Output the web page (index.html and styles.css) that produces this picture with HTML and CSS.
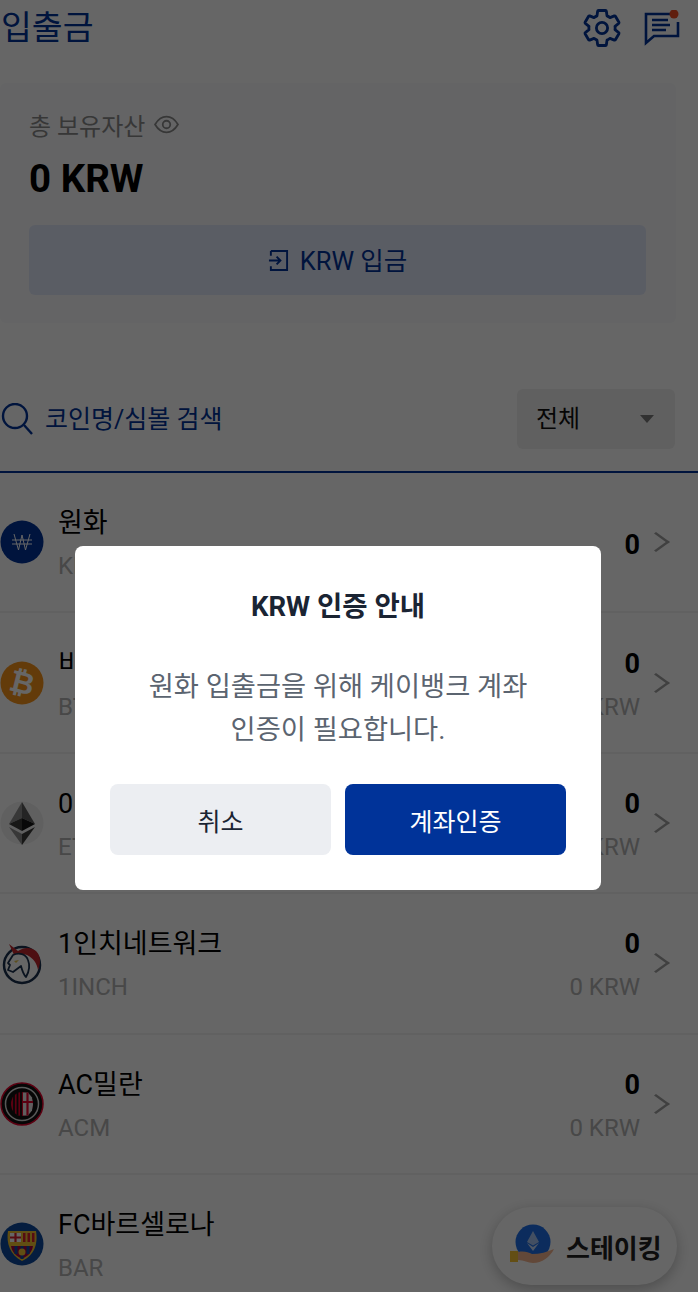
FILE: index.html
```html
<!DOCTYPE html>
<html lang="ko">
<head>
    <meta charset="UTF-8">
    <title>입출금</title>
    <link rel="stylesheet" href="styles.css">
</head>
<body>
<div class="page">
    <header class="top-bar">
        <h1>입출금</h1>
        <div class="top-icons">
            <svg class="gear" viewBox="0 0 24 24" fill="none" stroke="#003399" stroke-width="1.6" stroke-linejoin="round">
                <path d="M19.43 12.98c.04-.32.07-.64.07-.98 0-.34-.03-.66-.07-.98l2.11-1.65c.19-.15.24-.42.12-.64l-2-3.46c-.09-.16-.26-.25-.44-.25-.06 0-.12.01-.17.03l-2.49 1c-.52-.4-1.08-.73-1.69-.98l-.38-2.65C14.46 2.18 14.25 2 14 2h-4c-.25 0-.46.18-.49.42l-.38 2.65c-.61.25-1.17.59-1.69.98l-2.49-1c-.06-.02-.12-.03-.18-.03-.17 0-.34.09-.43.25l-2 3.46c-.13.22-.07.49.12.64l2.11 1.65c-.04.32-.07.65-.07.98 0 .33.03.66.07.98l-2.11 1.65c-.19.15-.24.42-.12.64l2 3.46c.09.16.26.25.44.25.06 0 .12-.01.17-.03l2.49-1c.52.4 1.08.73 1.69.98l.38 2.65c.03.24.24.42.49.42h4c.25 0 .46-.18.49-.42l.38-2.65c.61-.25 1.17-.59 1.69-.98l2.49 1c.06.02.12.03.18.03.17 0 .34-.09.43-.25l2-3.46c.12-.22.07-.49-.12-.64l-2.11-1.65z"/>
                <circle cx="12" cy="12" r="3.2"/>
            </svg>
            <svg class="notice" viewBox="0 0 36 36" fill="none" stroke="#003399" stroke-width="2.6">
                <path d="M30 4H2v29l8-7h24V12"/>
                <path d="M8 10h16M8 15h18M8 20h14"/>
                <circle cx="30" cy="4" r="4.5" fill="#f04e23" stroke="none"/>
            </svg>
        </div>
    </header>

    <section class="asset-card">
        <div class="asset-label">
            총 보유자산
            <svg class="eye" viewBox="0 0 24 24" fill="none" stroke="#8a8a8a" stroke-width="1.7">
                <path d="M1 12c3-5 6.500-7.500 11-7.500S20 7 23 12c-3 5-6.500 7.500-11 7.500S4 17 1 12z"/>
                <circle cx="12" cy="12" r="3.600"/>
            </svg>
        </div>
        <div class="asset-total">0 KRW</div>
        <button class="deposit-btn">
            <svg class="enter" viewBox="0 0 22 22" fill="none" stroke="#003399" stroke-width="2">
                <path d="M3 1h17v20H3v-4M3 6V1M1 11h12M9 7l4 4-4 4"/>
            </svg>
            KRW 입금
        </button>
    </section>

    <div class="search-bar">
        <div class="search-box">
            <svg class="lens" viewBox="0 0 32 32" fill="none" stroke="#003399" stroke-width="2.400">
                <circle cx="14" cy="13" r="12"/>
                <path d="M23 22l8 9"/>
            </svg>
            <span>코인명/심볼 검색</span>
        </div>
        <div class="filter">전체<i class="caret"></i></div>
    </div>

    <ul class="coin-list">
        <li class="coin">
            <svg class="coin-icon" viewBox="0 0 44 44">
                <circle cx="22" cy="22" r="21.500" fill="#003399"/>
                <path d="M14 14l4.500 16L22 15l3.500 15L30 14M12 20h20M12 24h20" fill="none" stroke="#fff" stroke-width="1"/>
            </svg>
            <div class="coin-names"><b>원화</b><small>KRW</small></div>
            <div class="coin-values"><b>0</b></div>
            <i class="chevron"></i>
        </li>
        <li class="coin">
            <svg class="coin-icon" viewBox="0 0 44 44">
                <circle cx="22" cy="22" r="21.500" fill="#f7931a"/>
                <text class="btc-mark" x="22" y="32" text-anchor="middle" transform="rotate(14 22 22)">₿</text>
            </svg>
            <div class="coin-names"><b>비트코인</b><small>BTC</small></div>
            <div class="coin-values"><b>0</b><small>0 KRW</small></div>
            <i class="chevron"></i>
        </li>
        <li class="coin">
            <svg class="coin-icon" viewBox="0 0 44 44">
                <circle cx="22" cy="22" r="21.500" fill="#f0f0f0"/>
                <path d="M22 1L9 23l13-6z" fill="#8c8c8c"/>
                <path d="M22 1l13 22-13-6z" fill="#5a5a5a"/>
                <path d="M9 23l13-6v13z" fill="#3c3c3b"/>
                <path d="M35 23l-13-6v13z" fill="#141414"/>
                <path d="M9 26l13 18V33z" fill="#8c8c8c"/>
                <path d="M35 26L22 44V33z" fill="#3c3c3b"/>
            </svg>
            <div class="coin-names"><b>0</b><small>ETH</small></div>
            <div class="coin-values"><b>0</b><small>0 KRW</small></div>
            <i class="chevron"></i>
        </li>
        <li class="coin">
            <svg class="coin-icon" viewBox="0 0 44 44">
                <circle cx="22" cy="24" r="18" fill="#fff" stroke="#1b314f" stroke-width="2.500"/>
                <path d="M9 3l9 7c6-4 13-4 18 0 5 5 5 12 2 19-1-7-5-12-11-15-5-1-9 0-12 2z" fill="#c1272d"/>
                <path d="M13 14c6-3 13-1 15 5 2 5 2 10-2 17-3-3-4-7-5-11l-8 6-5-2 2-5-2-2z" fill="#fff" stroke="#1b314f" stroke-width="1.800" stroke-linejoin="round"/>
                <path d="M14 20l5-1-3 3z" fill="#e8c64a"/>
            </svg>
            <div class="coin-names"><b>1인치네트워크</b><small>1INCH</small></div>
            <div class="coin-values"><b>0</b><small>0 KRW</small></div>
            <i class="chevron"></i>
        </li>
        <li class="coin">
            <svg class="coin-icon" viewBox="0 0 44 44">
                <circle cx="22" cy="22" r="21" fill="#111" stroke="#e4002b" stroke-width="1.500"/>
                <circle cx="22" cy="22" r="16.500" fill="none" stroke="#ddd" stroke-width="1.500"/>
                <ellipse cx="22" cy="22" rx="11" ry="12" fill="#e4002b"/>
                <path d="M14 13v18M17.500 11v22M21 10v24" stroke="#111" stroke-width="1.800"/>
                <path d="M23 10.500h5l4 5 1 7-1 6-4 5h-5z" fill="#eee"/>
                <path d="M27.500 10.500v23M23 20h10" stroke="#e4002b" stroke-width="2.200"/>
            </svg>
            <div class="coin-names"><b>AC밀란</b><small>ACM</small></div>
            <div class="coin-values"><b>0</b><small>0 KRW</small></div>
            <i class="chevron"></i>
        </li>
        <li class="coin">
            <svg class="coin-icon" viewBox="0 0 44 44">
                <circle cx="22" cy="22" r="21.500" fill="#0d4a9e"/>
                <path d="M8 9h28c2 12-1 24-14 30C10 33 6 21 8 9z" fill="#f2c230"/>
                <path d="M10 11h11v9H10z" fill="#fff"/>
                <path d="M15.500 11v9M10 15.500h11" stroke="#d8202f" stroke-width="2.200"/>
                <path d="M23 11h2.500v9H23zM27.500 11H30v9h-2.500zM32 11h2.500v9H32z" fill="#d8202f"/>
                <path d="M11 24h22c-1 6-5 10-11 13-6-3-10-7-11-13z" fill="#a50044"/>
                <path d="M16 24v8M22 24v13M28 24v8" stroke="#0d4a9e" stroke-width="3"/>
                <circle cx="22" cy="30" r="3.500" fill="#f2c230"/>
            </svg>
            <div class="coin-names"><b>FC바르셀로나</b><small>BAR</small></div>
            <i class="chevron"></i>
        </li>
    </ul>

    <div class="staking">
        <svg class="staking-icon" viewBox="0 0 46 44">
            <circle cx="24" cy="18" r="17.500" fill="#1e6fe8"/>
            <path d="M24 7l-6 11 6 3.500 6-3.500z" fill="#a9c6f5"/>
            <path d="M24 23l-6-4 6 8 6-8z" fill="#c6daf9"/>
            <path d="M9 28c6-1 10 0 14 2 8 0 15-2 22-5-4 8-12 14-21 14-5 0-9-3-15-3z" fill="#f6b48f"/>
            <path d="M1 27h8v11H1z" fill="#f7c232"/>
        </svg>
        스테이킹
    </div>
</div>

<div class="dim"></div>

<div class="modal">
    <h2>KRW 인증 안내</h2>
    <p>원화 입출금을 위해 케이뱅크 계좌<br>인증이 필요합니다.</p>
    <div class="modal-btns">
        <button class="btn-cancel">취소</button>
        <button class="btn-ok">계좌인증</button>
    </div>
</div>
</body>
</html>
```

FILE: styles.css
```css
* {
    box-sizing: border-box;
}

html, body {
    margin: 0;
    height: 1292px;
    overflow: hidden;
}

body {
    background: #fff;
    font-family: Roboto, "Noto Sans CJK KR", sans-serif;
    color: #000;
}

.page {
    position: relative;
    height: 1292px;
    overflow: hidden;
}

/* 상단 */
.top-bar {
    height: 83px;
    padding: 0 18px 28px 1px;
    display: flex;
    align-items: center;
    justify-content: space-between;
}

.top-bar h1 {
    margin: -6px 0 0;
    font-size: 33.500px;
    font-weight: 400;
    color: #003399;
}

.top-icons {
    display: flex;
    align-items: center;
    gap: 24px;
}

.gear {
    width: 42px;
    height: 42px;
    margin-right: -3px;
}

.notice {
    width: 36px;
    height: 36px;
}

/* 자산 카드 */
.asset-card {
    width: 676px;
    height: 240px;
    padding: 24px 29px 0;
    background: #fafbfd;
    border-radius: 6px;
}

.asset-label {
    display: flex;
    align-items: center;
    gap: 9px;
    height: 34px;
    font-size: 24px;
    color: #8a8a8a;
}

.eye {
    width: 25px;
    height: 25px;
}

.asset-total {
    margin-top: 13px;
    height: 50px;
    line-height: 50px;
    font-size: 38.500px;
    font-weight: 700;
}

.deposit-btn {
    display: flex;
    align-items: center;
    justify-content: center;
    gap: 11px;
    width: 617px;
    height: 70px;
    margin-top: 21px;
    padding: 0 0 4px;
    border: none;
    border-radius: 6px;
    background: #e2e8fb;
    color: #003399;
    font: 400 25.500px Roboto, "Noto Sans CJK KR", sans-serif;
}

.enter {
    width: 21px;
    height: 21px;
    margin-top: 4px;
}

/* 검색 */
.search-bar {
    height: 150px;
    padding: 66px 23px 22px 1px;
    display: flex;
    align-items: center;
    justify-content: space-between;
    border-bottom: 2px solid #003399;
}

.search-box {
    display: flex;
    align-items: center;
    gap: 12px;
    font-size: 25px;
    color: #003399;
}

.search-box span {
    margin-top: -5px;
}

.lens {
    width: 32px;
    height: 32px;
}

.filter {
    position: relative;
    width: 158px;
    height: 60px;
    line-height: 60px;
    padding-left: 19px;
    border-radius: 6px;
    background: #f0f0f0;
    font-size: 24px;
    color: #111;
}

.caret {
    position: absolute;
    right: 21px;
    top: 26px;
    border-left: 7px solid transparent;
    border-right: 7px solid transparent;
    border-top: 8px solid #7a7a7a;
}

/* 코인 목록 */
.coin-list {
    margin: 0;
    padding: 0;
    list-style: none;
}

.coin {
    height: 140.4px;
    padding: 0 30px 0 0;
    display: flex;
    align-items: center;
    border-bottom: 2px solid #f2f2f2;
}

.coin-icon {
    flex: none;
    width: 44px;
    height: 44px;
    margin-right: 14px;
}

.btc-mark {
    font: 700 30px "DejaVu Sans", sans-serif;
    fill: #fff;
}

.coin-names {
    flex: 1;
    display: flex;
    flex-direction: column;
    gap: 7px;
    padding-top: 5px;
}

.coin b {
    display: block;
    height: 36px;
    line-height: 36px;
    font-size: 27px;
    font-weight: 400;
}

.coin small {
    display: block;
    height: 36px;
    line-height: 36px;
    font-size: 24px;
    color: #b3b3b3;
}

.coin-values {
    display: flex;
    flex-direction: column;
    align-items: flex-end;
    gap: 7px;
    padding-top: 5px;
}

.coin-values b {
    font-weight: 700;
}

.chevron {
    width: 14px;
    height: 14px;
    margin: 0 5px 0 9px;
    border-top: 2px solid #a0a0a0;
    border-right: 2px solid #a0a0a0;
    transform: scaleX(1.400) rotate(45deg);
}

/* 스테이킹 버튼 */
.staking {
    position: absolute;
    left: 492px;
    top: 1207px;
    width: 185px;
    height: 78px;
    padding-left: 17px;
    display: flex;
    align-items: center;
    gap: 11px;
    border-radius: 39px;
    background: #fff;
    box-shadow: 0 4px 14px rgba(0,0,0,0.25);
    font-size: 26px;
    font-weight: 700;
    color: #222;
}

.staking-icon {
    width: 46px;
    height: 44px;
}

/* 팝업 */
.dim {
    position: fixed;
    inset: 0;
    background: rgba(0,0,0,0.6);
}

.modal {
    position: fixed;
    left: 75px;
    top: 546px;
    width: 526px;
    height: 344px;
    padding: 42px 35px 0;
    border-radius: 8px;
    background: #fff;
    text-align: center;
}

.modal h2 {
    margin: 0;
    height: 38px;
    line-height: 38px;
    font-size: 27.500px;
    font-weight: 700;
    color: #1a2433;
}

.modal p {
    margin: 40px 0 0;
    line-height: 43px;
    font-size: 27.300px;
    color: #5b6470;
}

.modal-btns {
    display: flex;
    gap: 14px;
    margin-top: 32px;
}

.modal-btns button {
    flex: 1;
    height: 71px;
    border: none;
    border-radius: 8px;
    font: 400 25px Roboto, "Noto Sans CJK KR", sans-serif;
}

.btn-cancel {
    background: #eceef2;
    color: #1a2433;
}

.btn-ok {
    background: #003399;
    color: #fff;
}
```
